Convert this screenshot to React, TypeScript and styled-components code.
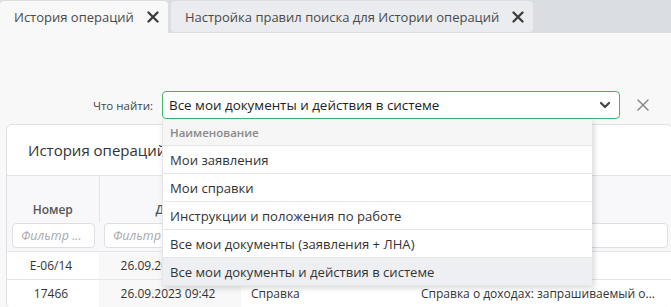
import React from "react";
import styled, { createGlobalStyle } from "styled-components";

const Global = createGlobalStyle`
  html, body { margin: 0; padding: 0; }
  body {
    background: #f8f8f8;
    font-family: "Open Sans", "Noto Sans", sans-serif;
    color: #333;
    overflow: hidden;
  }
  * { box-sizing: border-box; }
`;

const Page = styled.div`
  width: 671px;
  height: 307px;
  overflow: hidden;
  background: #f8f8f8;
`;

const TabBar = styled.div`
  display: flex;
  gap: 3px;
  height: 33px;
  padding-top: 1px;
  background: #dadde1;
`;

const Tab = styled.div<{ $active?: boolean }>`
  display: flex;
  align-items: center;
  gap: 13px;
  padding: 0 9px 0 14px;
  background: ${(p) => (p.$active ? "#f8f8f8" : "#eaecef")};
  height: ${(p) => (p.$active ? "32px" : "31px")};
  border-radius: ${(p) => (p.$active ? "4px 4px 0 0" : "4px")};
  font-size: 13px;
  color: #4a4a4a;
  white-space: nowrap;
`;

const CloseIcon = () => (
  <svg width="12" height="12" viewBox="0 0 12 12">
    <path d="M1.5 1.5 L10.5 10.5 M10.5 1.5 L1.5 10.5" stroke="#3c3c3c" strokeWidth="2.3" strokeLinecap="round" />
  </svg>
);

const Content = styled.div`
  padding-top: 58px;
`;

const SearchRow = styled.div`
  display: grid;
  grid-template-columns: 153px 458px 24px;
  column-gap: 9px;
  align-items: center;
  height: 28px;
`;

const Label = styled.div`
  text-align: right;
  font-size: 11.5px;
  color: #444;
`;

const SelectWrap = styled.div`
  position: relative;
  height: 28px;
`;

const SelectBox = styled.div`
  display: flex;
  align-items: center;
  justify-content: space-between;
  height: 28px;
  padding: 0 8px 0 6px;
  border: 1px solid #3fb56a;
  border-radius: 4px;
  background: #fff;
  font-size: 13.4px;
  color: #222;
`;

const Chevron = () => (
  <svg width="12" height="8" viewBox="0 0 12 8">
    <path d="M2 2 L6 6 L10 2" fill="none" stroke="#444" strokeWidth="2.2" strokeLinecap="round" strokeLinejoin="round" />
  </svg>
);

const ClearButton = styled.div`
  display: flex;
  align-items: center;
  justify-content: center;
  margin-left: 4px;
`;

const ClearIcon = () => (
  <svg width="12" height="12" viewBox="0 0 12 12">
    <path d="M1 1 L11 11 M11 1 L1 11" stroke="#8a8a8a" strokeWidth="1.5" strokeLinecap="round" />
  </svg>
);

const Dropdown = styled.div`
  position: absolute;
  top: 29px;
  left: 0;
  width: 430px;
  background: #fff;
  border-left: 1px solid #e6e6e6;
  box-shadow: 2px 2px 6px rgba(0, 0, 0, 0.16);
  z-index: 10;
`;

const DropHeader = styled.div`
  display: flex;
  align-items: center;
  height: 26px;
  padding-left: 7px;
  background: #f6f6f6;
  border-bottom: 1px solid #e4e4e6;
  font-size: 11.5px;
  font-weight: 600;
  color: #8a8a8a;
`;

const DropItem = styled.div<{ $selected?: boolean }>`
  display: flex;
  align-items: center;
  height: 28px;
  padding-left: 7px;
  border-bottom: 1px solid #e7e7ea;
  background: ${(p) => (p.$selected ? "#eeeff2" : "#fff")};
  font-size: 13.1px;
  color: #333;
`;

const Card = styled.div`
  margin: 5px -2px 0 6px;
  background: #fff;
  border: 1px solid #e0e1e6;
  border-radius: 6px;
  overflow: hidden;
`;

const CardTitle = styled.div`
  display: flex;
  align-items: center;
  height: 51px;
  padding-left: 21px;
  font-size: 15px;
  color: #333;
  border-bottom: 1px solid #e4e4e9;
`;

const Table = styled.table`
  width: 100%;
  border-collapse: collapse;
  table-layout: fixed;
`;

const HeadCell = styled.th`
  height: 46px;
  padding: 0 4px 4px;
  vertical-align: bottom;
  background: #f8f8fa;
  border-right: 1px solid #e4e4ea;
  font-size: 12px;
  font-weight: 600;
  color: #555;
  text-align: center;
  &:last-child { border-right: none; }
`;

const FilterCell = styled.th`
  height: 29px;
  padding: 1px 4px 3px 5px;
  background: #f8f8fa;
`;

const FilterInput = styled.input`
  display: block;
  width: 100%;
  height: 25px;
  padding: 0 8px;
  border: 1px solid #dedfe4;
  border-radius: 4px;
  background: #fff;
  font-family: inherit;
  font-size: 12.5px;
  font-style: italic;
  outline: none;
  &::placeholder { color: #aaa; }
`;

const Row = styled.tr`
  border-top: 1px solid #e6e6ea;
`;

const Cell = styled.td<{ $align?: string; $shade?: boolean }>`
  height: 28px;
  padding: 0 14px 0 10px;
  font-size: 12px;
  color: #333;
  text-align: ${(p) => p.$align || "left"};
  background: ${(p) => (p.$shade ? "#f8f8f9" : "#fff")};
  white-space: nowrap;
  overflow: hidden;
  text-overflow: ellipsis;
`;

const options = [
  "Мои заявления",
  "Мои справки",
  "Инструкции и положения по работе",
  "Все мои документы (заявления + ЛНА)",
  "Все мои документы и действия в системе",
];

const rows = [
  { num: "E-06/14", date: "26.09.2023 10:15", type: "Заявление", desc: "Заявление на отпуск" },
  { num: "17466", date: "26.09.2023 09:42", type: "Справка", desc: "Справка о доходах: запрашиваемый объект документа" },
];

export default function App() {
  return (
    <Page>
      <Global />
      <TabBar>
        <Tab $active>
          История операций
          <CloseIcon />
        </Tab>
        <Tab>
          Настройка правил поиска для Истории операций
          <CloseIcon />
        </Tab>
      </TabBar>
      <Content>
        <SearchRow>
          <Label>Что найти:</Label>
          <SelectWrap>
            <SelectBox>
              Все мои документы и действия в системе
              <Chevron />
            </SelectBox>
            <Dropdown>
              <DropHeader>Наименование</DropHeader>
              {options.map((o, i) => (
                <DropItem key={o} $selected={i === options.length - 1}>
                  {o}
                </DropItem>
              ))}
            </Dropdown>
          </SelectWrap>
          <ClearButton>
            <ClearIcon />
          </ClearButton>
        </SearchRow>
        <Card>
          <CardTitle>История операций</CardTitle>
          <Table>
            <colgroup>
              <col style={{ width: 92 }} />
              <col style={{ width: 142 }} />
              <col style={{ width: 170 }} />
              <col />
            </colgroup>
            <thead>
              <tr>
                <HeadCell>Номер</HeadCell>
                <HeadCell>Дата</HeadCell>
                <HeadCell>Тип</HeadCell>
                <HeadCell>Описание</HeadCell>
              </tr>
              <tr>
                <FilterCell><FilterInput placeholder="Фильтр ..." /></FilterCell>
                <FilterCell><FilterInput placeholder="Фильтр ..." /></FilterCell>
                <FilterCell><FilterInput placeholder="Фильтр ..." /></FilterCell>
                <FilterCell><FilterInput placeholder="Фильтр ..." /></FilterCell>
              </tr>
            </thead>
            <tbody>
              {rows.map((r) => (
                <Row key={r.num}>
                  <Cell $align="center">{r.num}</Cell>
                  <Cell $align="center" $shade>{r.date}</Cell>
                  <Cell>{r.type}</Cell>
                  <Cell>{r.desc}</Cell>
                </Row>
              ))}
            </tbody>
          </Table>
        </Card>
      </Content>
    </Page>
  );
}
